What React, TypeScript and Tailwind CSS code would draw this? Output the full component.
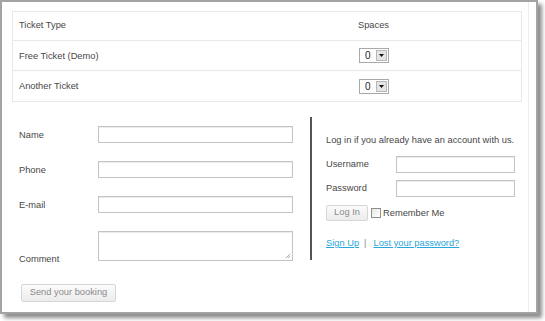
import React from "react";

/** Liste déroulante compacte, style Windows classique */
function SpacesSelect() {
  return (
    <div className="flex h-[15px] w-[30px] border border-[#a9a9a9] bg-white">
      <span className="flex-1 pl-[5px] text-[10px] font-medium leading-[13px] text-[#222]">0</span>
      <span className="m-px flex w-[11px] items-center justify-center border border-[#b8b8b8] bg-[#e4e4e4]">
        <svg width="5" height="3" viewBox="0 0 5 3">
          <path d="M0 0h5L2.5 3z" fill="#111" />
        </svg>
      </span>
    </div>
  );
}

function TextInput({ className = "" }: { className?: string }) {
  return (
    <div
      className={`h-[17px] border border-[#c4c4c4] bg-white shadow-[inset_0_1px_1px_rgba(0,0,0,0.08)] ${className}`}
    />
  );
}

const tickets = [
  { name: "Free Ticket (Demo)" },
  { name: "Another Ticket" },
];

export default function App() {
  return (
    <div className="h-[321px] w-[545px] bg-white font-['Liberation_Sans',Arial,sans-serif] text-[9.3px] text-[#474747]">
      {/* Cadre de capture avec ombre portée */}
      <div className="h-[314px] w-[538px] border-2 border-[#a3a3a3] bg-white shadow-[4px_4px_4px_rgba(0,0,0,0.45)]">
        <div className="h-full w-[527px] border-r border-[#ececec] pt-[9px]">
          {/* Tableau des billets */}
          <div className="ml-[10px] w-[510px] border border-[#e8e8e8]">
            <div className="flex h-[29px] items-center border-b border-[#e8e8e8]">
              <span className="w-[345px] pl-[6px]">Ticket Type</span>
              <span>Spaces</span>
            </div>
            {tickets.map((t, i) => (
              <div
                key={t.name}
                className={`flex h-[30px] items-center ${
                  i < tickets.length - 1 ? "border-b border-[#e8e8e8]" : ""
                }`}
              >
                <span className="w-[346px] pl-[6px] pt-[2px]">{t.name}</span>
                <SpacesSelect />
              </div>
            ))}
          </div>

          {/* Formulaire de réservation + connexion */}
          <div className="mt-[15px] flex pl-[17px]">
            <div className="w-[274px] pt-[9px]">
              <div className="flex flex-col gap-[18px]">
                {["Name", "Phone", "E-mail"].map((label) => (
                  <div key={label} className="flex h-[17px] items-center">
                    <span className="w-[79px] pt-[2px]">{label}</span>
                    <TextInput className="w-[195px]" />
                  </div>
                ))}
                <div className="flex items-end">
                  <span className="-mb-[4px] w-[79px] leading-[11px]">Comment</span>
                  <div className="relative h-[30px] w-[196px] border border-[#c4c4c4] bg-white shadow-[inset_0_1px_1px_rgba(0,0,0,0.08)]">
                    <svg
                      className="absolute bottom-px right-px"
                      width="6"
                      height="6"
                      viewBox="0 0 6 6"
                    >
                      <path d="M5 1L1 5M5 3L3 5" stroke="#aaa" strokeWidth="1" />
                    </svg>
                  </div>
                </div>
              </div>
              <button className="ml-[2px] mt-[23px] h-[18px] w-[95px] rounded-[2px] border border-[#d6d6d6] bg-gradient-to-b from-[#fbfbfb] to-[#ececec] text-[9.3px] text-[#8a8a8a]">
                Send your booking
              </button>
            </div>

            <div className="ml-[17px] h-[143px] w-[2px] bg-[#555]" />

            <div className="pl-[14px] pt-[18px]">
              <p className="leading-[11px]">Log in if you already have an account with us.</p>
              <div className="mt-[10px] flex h-[17px] items-center">
                <span className="w-[70px] pt-[1px]">Username</span>
                <TextInput className="w-[119px]" />
              </div>
              <div className="mt-[7px] flex h-[17px] items-center">
                <span className="w-[70px] pt-[1px]">Password</span>
                <TextInput className="w-[119px]" />
              </div>
              <div className="mt-[8px] flex h-[16px] items-center">
                <button className="h-[16px] w-[42px] rounded-[2px] border border-[#d6d6d6] bg-gradient-to-b from-[#fbfbfb] to-[#ececec] text-[9.3px] text-[#8a8a8a]">
                  Log In
                </button>
                <span className="ml-[3px] h-[10px] w-[10px] border border-[#8f8f8f] bg-gradient-to-br from-[#e8e8e8] to-white" />
                <span className="ml-[2px] pt-[1px]">Remember Me</span>
              </div>
              <div className="mt-[17px] flex items-center leading-[11px]">
                <a className="text-[#29a6dc] underline">Sign Up</a>
                <span className="ml-[5px] text-[#888]">|</span>
                <a className="ml-[7px] text-[#29a6dc] underline">Lost your password?</a>
              </div>
            </div>
          </div>
        </div>
      </div>
    </div>
  );
}
